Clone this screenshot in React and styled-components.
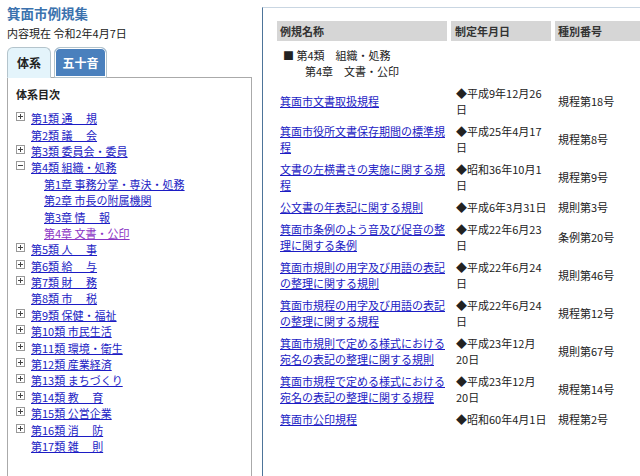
import React from 'react'
import styled, { createGlobalStyle } from 'styled-components'

const GlobalStyle = createGlobalStyle`
  html, body {
    margin: 0;
    padding: 0;
    background: #fff;
  }
  body {
    font-family: "Noto Sans CJK JP", "Liberation Sans", sans-serif;
    font-size: 11px;
    color: #222;
    overflow: hidden;
  }
  a {
    color: #1c1cc4;
    text-decoration: underline;
  }
`

const Page = styled.div`
    display: flex;
    width: 640px;
    height: 476px;
    overflow: hidden;
`

const Sidebar = styled.div`
    width: 245px;
    flex-shrink: 0;
    padding: 4px 0 0 7px;
    display: flex;
    flex-direction: column;
`

const SiteTitle = styled.h1`
    margin: 0;
    font-size: 13.5px;
    line-height: 18px;
    font-weight: bold;
    color: #3b72ae;
`

const AsOf = styled.p`
    margin: 3px 0 0;
    line-height: 16px;
`

const Tabs = styled.div`
    display: flex;
    gap: 3px;
    margin-top: 6px;
    margin-bottom: -1px;
    position: relative;
    z-index: 1;
`

const Tab = styled.div`
    width: ${p => p.$w}px;
    height: 31px;
    box-sizing: border-box;
    border: 1px solid #b4c4cc;
    border-bottom: ${p => (p.$active ? '1px solid #e4f4fb' : '1px solid #b4c4cc')};
    border-radius: 6px 6px 0 0;
    background: ${p => (p.$active ? '#e4f4fb' : '#4a80bd')};
    box-shadow: ${p => (p.$active ? 'none' : 'inset 0 0 0 1px #fff')};
    color: ${p => (p.$active ? '#222' : '#fff')};
    font-size: 12px;
    font-weight: bold;
    display: flex;
    align-items: center;
    justify-content: center;
`

const TreeBox = styled.div`
    flex: 1;
    border: 1px solid #aaa;
    border-bottom: none;
    padding: 8px 0 0 8px;
`

const TreeHeading = styled.div`
    font-weight: bold;
    line-height: 16px;
    margin-bottom: 8px;
`

const TreeRow = styled.div`
    display: flex;
    align-items: center;
    height: 16.4px;
    padding-left: ${p => (p.$child ? 28 : 0)}px;
    white-space: nowrap;
`

const ToggleSlot = styled.span`
    width: 9px;
    height: 9px;
    margin-right: 6px;
    margin-top: -3px;
    flex-shrink: 0;
    display: flex;
`

const TreeLink = styled.a`
    color: ${p => (p.$visited ? '#8b34c4' : '#1c1cc4')};
`

const Main = styled.div`
    flex: 1;
    margin: 7px 0 0 10px;
    border-top: 1px solid #c9d6e2;
    border-left: 1px solid #4d7499;
    padding-top: 13px;
    overflow: hidden;
`

const Table = styled.table`
    border-collapse: separate;
    border-spacing: 4px 0;
    margin-left: 10px;
    table-layout: fixed;
    width: 386px;

    th, td {
        box-sizing: border-box;
        text-align: left;
    }
`

const Th = styled.th`
    width: ${p => p.$w}px;
    height: 20px;
    padding: 0 0 0 ${p => p.$pl}px;
    background: #d6d6d6;
    font-weight: bold;
    color: #333;
    line-height: 20px;
`

const Td = styled.td`
    padding: 3px ${p => p.$pr}px 3px ${p => p.$pl}px;
    line-height: 16px;
    vertical-align: middle;
`

const SectionCell = styled.td`
    padding: 6px 3px 3px 6px;
    line-height: 16px;
`

const SubLine = styled.div`
    padding-left: 22px;
`

function Toggle({ open }) {
    return (
        <svg width="9" height="9" viewBox="0 0 9 9">
            <rect x="0.5" y="0.5" width="8" height="8" fill="#fff" stroke="#999" />
            <path d="M2 4.5h5" stroke="#444" />
            {!open && <path d="M4.5 2v5" stroke="#444" />}
        </svg>
    )
}

const tree = [
    { label: '第1類 通　 規', toggle: 'plus' },
    { label: '第2類 議　 会' },
    { label: '第3類 委員会・委員', toggle: 'plus' },
    { label: '第4類 組織・処務', toggle: 'minus' },
    { label: '第1章 事務分掌・専決・処務', child: true },
    { label: '第2章 市長の附属機関', child: true },
    { label: '第3章 情　 報', child: true },
    { label: '第4章 文書・公印', child: true, visited: true },
    { label: '第5類 人　 事', toggle: 'plus' },
    { label: '第6類 給　 与', toggle: 'plus' },
    { label: '第7類 財　 務', toggle: 'plus' },
    { label: '第8類 市　 税' },
    { label: '第9類 保健・福祉', toggle: 'plus' },
    { label: '第10類 市民生活', toggle: 'plus' },
    { label: '第11類 環境・衛生', toggle: 'plus' },
    { label: '第12類 産業経済', toggle: 'plus' },
    { label: '第13類 まちづくり', toggle: 'plus' },
    { label: '第14類 教　 育', toggle: 'plus' },
    { label: '第15類 公営企業', toggle: 'plus' },
    { label: '第16類 消　 防', toggle: 'plus' },
    { label: '第17類 雑　 則' },
]

const rules = [
    ['箕面市文書取扱規程', '◆平成9年12月26日', '規程第18号'],
    ['箕面市役所文書保存期間の標準規程', '◆平成25年4月17日', '規程第8号'],
    ['文書の左横書きの実施に関する規程', '◆昭和36年10月1日', '規程第9号'],
    ['公文書の年表記に関する規則', '◆平成6年3月31日', '規則第3号'],
    ['箕面市条例のよう音及び促音の整理に関する条例', '◆平成22年6月23日', '条例第20号'],
    ['箕面市規則の用字及び用語の表記の整理に関する規則', '◆平成22年6月24日', '規則第46号'],
    ['箕面市規程の用字及び用語の表記の整理に関する規程', '◆平成22年6月24日', '規程第12号'],
    ['箕面市規則で定める様式における宛名の表記の整理に関する規則', '◆平成23年12月20日', '規則第67号'],
    ['箕面市規程で定める様式における宛名の表記の整理に関する規程', '◆平成23年12月20日', '規程第14号'],
    ['箕面市公印規程', '◆昭和60年4月1日', '規程第2号'],
]

export default function App() {
    return (
        <Page>
            <GlobalStyle />
            <Sidebar>
                <SiteTitle>箕面市例規集</SiteTitle>
                <AsOf>内容現在 令和2年4月7日</AsOf>
                <Tabs>
                    <Tab $w={44} $active>体系</Tab>
                    <Tab $w={53}>五十音</Tab>
                </Tabs>
                <TreeBox>
                    <TreeHeading>体系目次</TreeHeading>
                    {tree.map(item => (
                        <TreeRow key={item.label} $child={item.child}>
                            {!item.child && (
                                <ToggleSlot>
                                    {item.toggle && <Toggle open={item.toggle === 'minus'} />}
                                </ToggleSlot>
                            )}
                            <TreeLink href="#" $visited={item.visited}>{item.label}</TreeLink>
                        </TreeRow>
                    ))}
                </TreeBox>
            </Sidebar>
            <Main>
                <Table>
                    <thead>
                        <tr>
                            <Th $w={170} $pl={3}>例規名称</Th>
                            <Th $w={100} $pl={4}>制定年月日</Th>
                            <Th $w={100} $pl={3}>種別番号</Th>
                        </tr>
                    </thead>
                    <tbody>
                        <tr>
                            <SectionCell colSpan={3}>
                                <div>■ 第4類　組織・処務</div>
                                <SubLine>第4章　文書・公印</SubLine>
                            </SectionCell>
                        </tr>
                        {rules.map(([name, date, kind]) => (
                            <tr key={name}>
                                <Td $pl={3} $pr={0}><a href="#">{name}</a></Td>
                                <Td $pl={5} $pr={4}>{date}</Td>
                                <Td $pl={3} $pr={3}>{kind}</Td>
                            </tr>
                        ))}
                    </tbody>
                </Table>
            </Main>
        </Page>
    )
}
